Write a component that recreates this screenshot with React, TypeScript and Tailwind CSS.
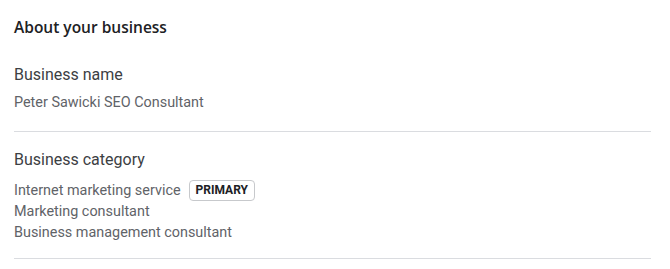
export default function App() {
  return (
    <main className="w-[670px] h-[269px] bg-white px-[14px] pt-[17px]" style={{ fontFamily: 'Roboto, "Open Sans", sans-serif' }}>
      <h2 className="text-[15.5px] leading-[20px] font-semibold text-[#202124]" style={{ fontFamily: '"Open Sans", Roboto, sans-serif' }}>About your business</h2>
      <div className="w-[637px] mt-[27px] pb-[19px] border-b border-[#dadce0]">
        <div className="text-[16px] leading-[22px] text-[#3c4043]">Business name</div>
        <div className="mt-[8px] text-[14.4px] leading-[18px] text-[#5f6368]">Peter Sawicki SEO Consultant</div>
      </div>
      <div className="w-[637px] pt-[17px] pb-[15px] border-b border-[#dadce0]">
        <div className="text-[16px] leading-[22px] text-[#3c4043]">Business category</div>
        <div className="mt-[9px] text-[14.4px] leading-[21px] text-[#5f6368]">
          <div className="flex items-center gap-[8px]">
            <span>Internet marketing service</span>
            <span className="px-[6px] h-[21px] flex items-center rounded-[4px] border border-[#c7c9cc] text-[12px] font-bold text-[#202124]">PRIMARY</span>
          </div>
          <div>Marketing consultant</div>
          <div>Business management consultant</div>
        </div>
      </div>
    </main>
  );
}
